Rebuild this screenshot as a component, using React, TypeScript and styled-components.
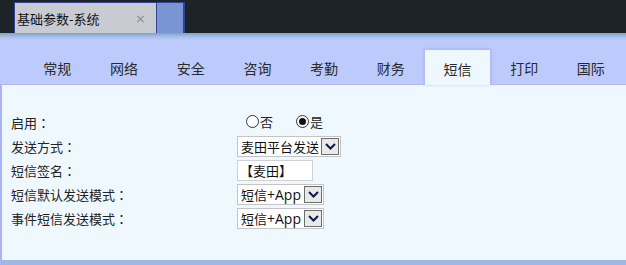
import React from 'react'
import styled, { createGlobalStyle } from 'styled-components'

const GlobalStyle = createGlobalStyle`
  html, body { margin: 0; padding: 0; }
  body {
    width: 626px;
    height: 265px;
    overflow: hidden;
    background: #f0f8ff;
    font-family: "Noto Sans CJK SC", "Noto Sans", sans-serif;
  }
`

const Page = styled.div`
  width: 626px;
  height: 265px;
  display: flex;
  flex-direction: column;
`

const TopBar = styled.div`
  height: 33px;
  box-sizing: border-box;
  padding: 2px 0 0 14px;
  background: #1d2428;
  display: flex;
`

const DocTab = styled.div`
  width: 143px;
  box-sizing: border-box;
  background: #c9cbd3;
  border: 1px solid #33439a;
  border-bottom: none;
  display: flex;
  align-items: center;
  justify-content: space-between;
  padding: 0 10px 0 2px;
  font-size: 13px;
  color: #111;
`

const Close = styled.span`
  color: #8a8d96;
  font-size: 13px;
  font-family: "DejaVu Sans", sans-serif;
`

const BlueBlock = styled.div`
  width: 28px;
  box-sizing: border-box;
  background: #7995d2;
  border: 1px solid #33439a;
  border-left: none;
  border-right-width: 2px;
  border-bottom: none;
`

const TabStrip = styled.div`
  height: 51px;
  box-sizing: border-box;
  background: linear-gradient(to bottom, #7fa2c2 0px, #a9c0e8 4px, #bccbfb 7px, #bccbfb 100%);
  display: flex;
  align-items: flex-end;
  padding-left: 24px;
`

const Tab = styled.div<{ $active?: boolean }>`
  width: 66.7px;
  box-sizing: border-box;
  display: flex;
  align-items: center;
  justify-content: center;
  font-size: 14px;
  color: #2a2a2a;
  padding-top: 2px;
  position: relative;
  z-index: 1;
  background: ${p => (p.$active ? '#f0f8ff' : 'transparent')};
  border: 1px solid ${p => (p.$active ? '#b3bcf6' : 'transparent')};
  border-bottom: none;
  margin-bottom: ${p => (p.$active ? '-1px' : '0')};
  height: ${p => (p.$active ? '36px' : '35px')};
  box-shadow: ${p => (p.$active ? '0 0 2px rgba(120,140,230,0.5)' : 'none')};
`

const Content = styled.div`
  flex: 1;
  box-sizing: border-box;
  background: #f0f8ff;
  border-top: 1px solid #b3b6f2;
  border-left: 2px solid #aab4f4;
  border-bottom: 5px solid #9fb7e6;
  padding: 27px 0 0 9px;
`

const Form = styled.div`
  display: grid;
  grid-template-columns: 226px auto;
  grid-auto-rows: 21px;
  row-gap: 3px;
  align-items: center;
`

const Label = styled.div`
  font-size: 13px;
  color: #222;
`

const Colon = styled.span`
  font-family: "Noto Sans CJK JP", sans-serif;
`

const Control = styled.div`
  display: flex;
  align-items: center;
`

const RadioGroup = styled.div`
  display: flex;
  align-items: center;
  gap: 23px;
  padding-left: 9px;
  margin-top: -3px;
  font-size: 13px;
  color: #222;
`

const RadioItem = styled.label`
  display: flex;
  align-items: center;
  gap: 1px;
`

const Dot = styled.span<{ $checked?: boolean }>`
  width: 13px;
  height: 13px;
  box-sizing: border-box;
  border-radius: 50%;
  border: 1px solid #333;
  background: #fff;
  display: flex;
  align-items: center;
  justify-content: center;
  &::after {
    content: '';
    width: 7px;
    height: 7px;
    border-radius: 50%;
    background: ${p => (p.$checked ? '#111' : 'transparent')};
  }
`

const SelectBox = styled.div<{ $w: number }>`
  width: ${p => p.$w}px;
  height: 21px;
  box-sizing: border-box;
  border: 1px solid #c4c4c4;
  background: #fff;
  display: flex;
  align-items: center;
  justify-content: space-between;
  padding: 0 1px 0 3px;
  font-size: 13px;
  color: #111;
  white-space: nowrap;
`

const Latin = styled.span`
  font-family: "Open Sans", sans-serif;
  font-size: 14px;
`

const Arrow = styled.span`
  width: 18px;
  height: 17px;
  flex-shrink: 0;
  box-sizing: border-box;
  border: 1px solid #6d6d6d;
  background: #e9e9e9;
  display: flex;
  align-items: center;
  justify-content: center;
`

const TextBox = styled.div`
  width: 76px;
  height: 21px;
  box-sizing: border-box;
  border: 1px solid #d0d0d0;
  background: #fff;
  display: flex;
  align-items: center;
  padding-left: 2px;
  font-size: 13px;
  color: #111;
  font-family: "Noto Sans CJK JP", sans-serif;
`

// CJK text stays at 13px, the latin part ("+App") is drawn a bit larger like the original
function splitText(value: string) {
  return value.split(/([\x20-\x7e]+)/).filter(Boolean).map((part, i) =>
    /^[\x20-\x7e]+$/.test(part) ? <Latin key={i}>{part}</Latin> : <span key={i}>{part}</span>
  )
}

function Select({ value, width }: { value: string; width: number }) {
  return (
    <SelectBox $w={width}>
      <span>{splitText(value)}</span>
      <Arrow>
        <svg width="11" height="7" viewBox="0 0 11 7">
          <path d="M1 1 L5.5 5.5 L10 1" fill="none" stroke="#0a1a4a" strokeWidth="2" />
        </svg>
      </Arrow>
    </SelectBox>
  )
}

const tabs = ['常规', '网络', '安全', '咨询', '考勤', '财务', '短信', '打印', '国际']

const rowLabel = (text: string) => (
  <Label>
    {text}
    <Colon>：</Colon>
  </Label>
)

export default function App() {
  return (
    <Page>
      <GlobalStyle />
      <TopBar>
        <DocTab>
          <span>基础参数-系统</span>
          <Close>×</Close>
        </DocTab>
        <BlueBlock />
      </TopBar>
      <TabStrip>
        {tabs.map(t => (
          <Tab key={t} $active={t === '短信'}>{t}</Tab>
        ))}
      </TabStrip>
      <Content>
        <Form>
          {rowLabel('启用')}
          <Control>
            <RadioGroup>
              <RadioItem><Dot />否</RadioItem>
              <RadioItem><Dot $checked />是</RadioItem>
            </RadioGroup>
          </Control>
          {rowLabel('发送方式')}
          <Control><Select value="麦田平台发送" width={104} /></Control>
          {rowLabel('短信签名')}
          <Control><TextBox>【麦田】</TextBox></Control>
          {rowLabel('短信默认发送模式')}
          <Control><Select value="短信+App" width={87} /></Control>
          {rowLabel('事件短信发送模式')}
          <Control><Select value="短信+App" width={87} /></Control>
        </Form>
      </Content>
    </Page>
  )
}
